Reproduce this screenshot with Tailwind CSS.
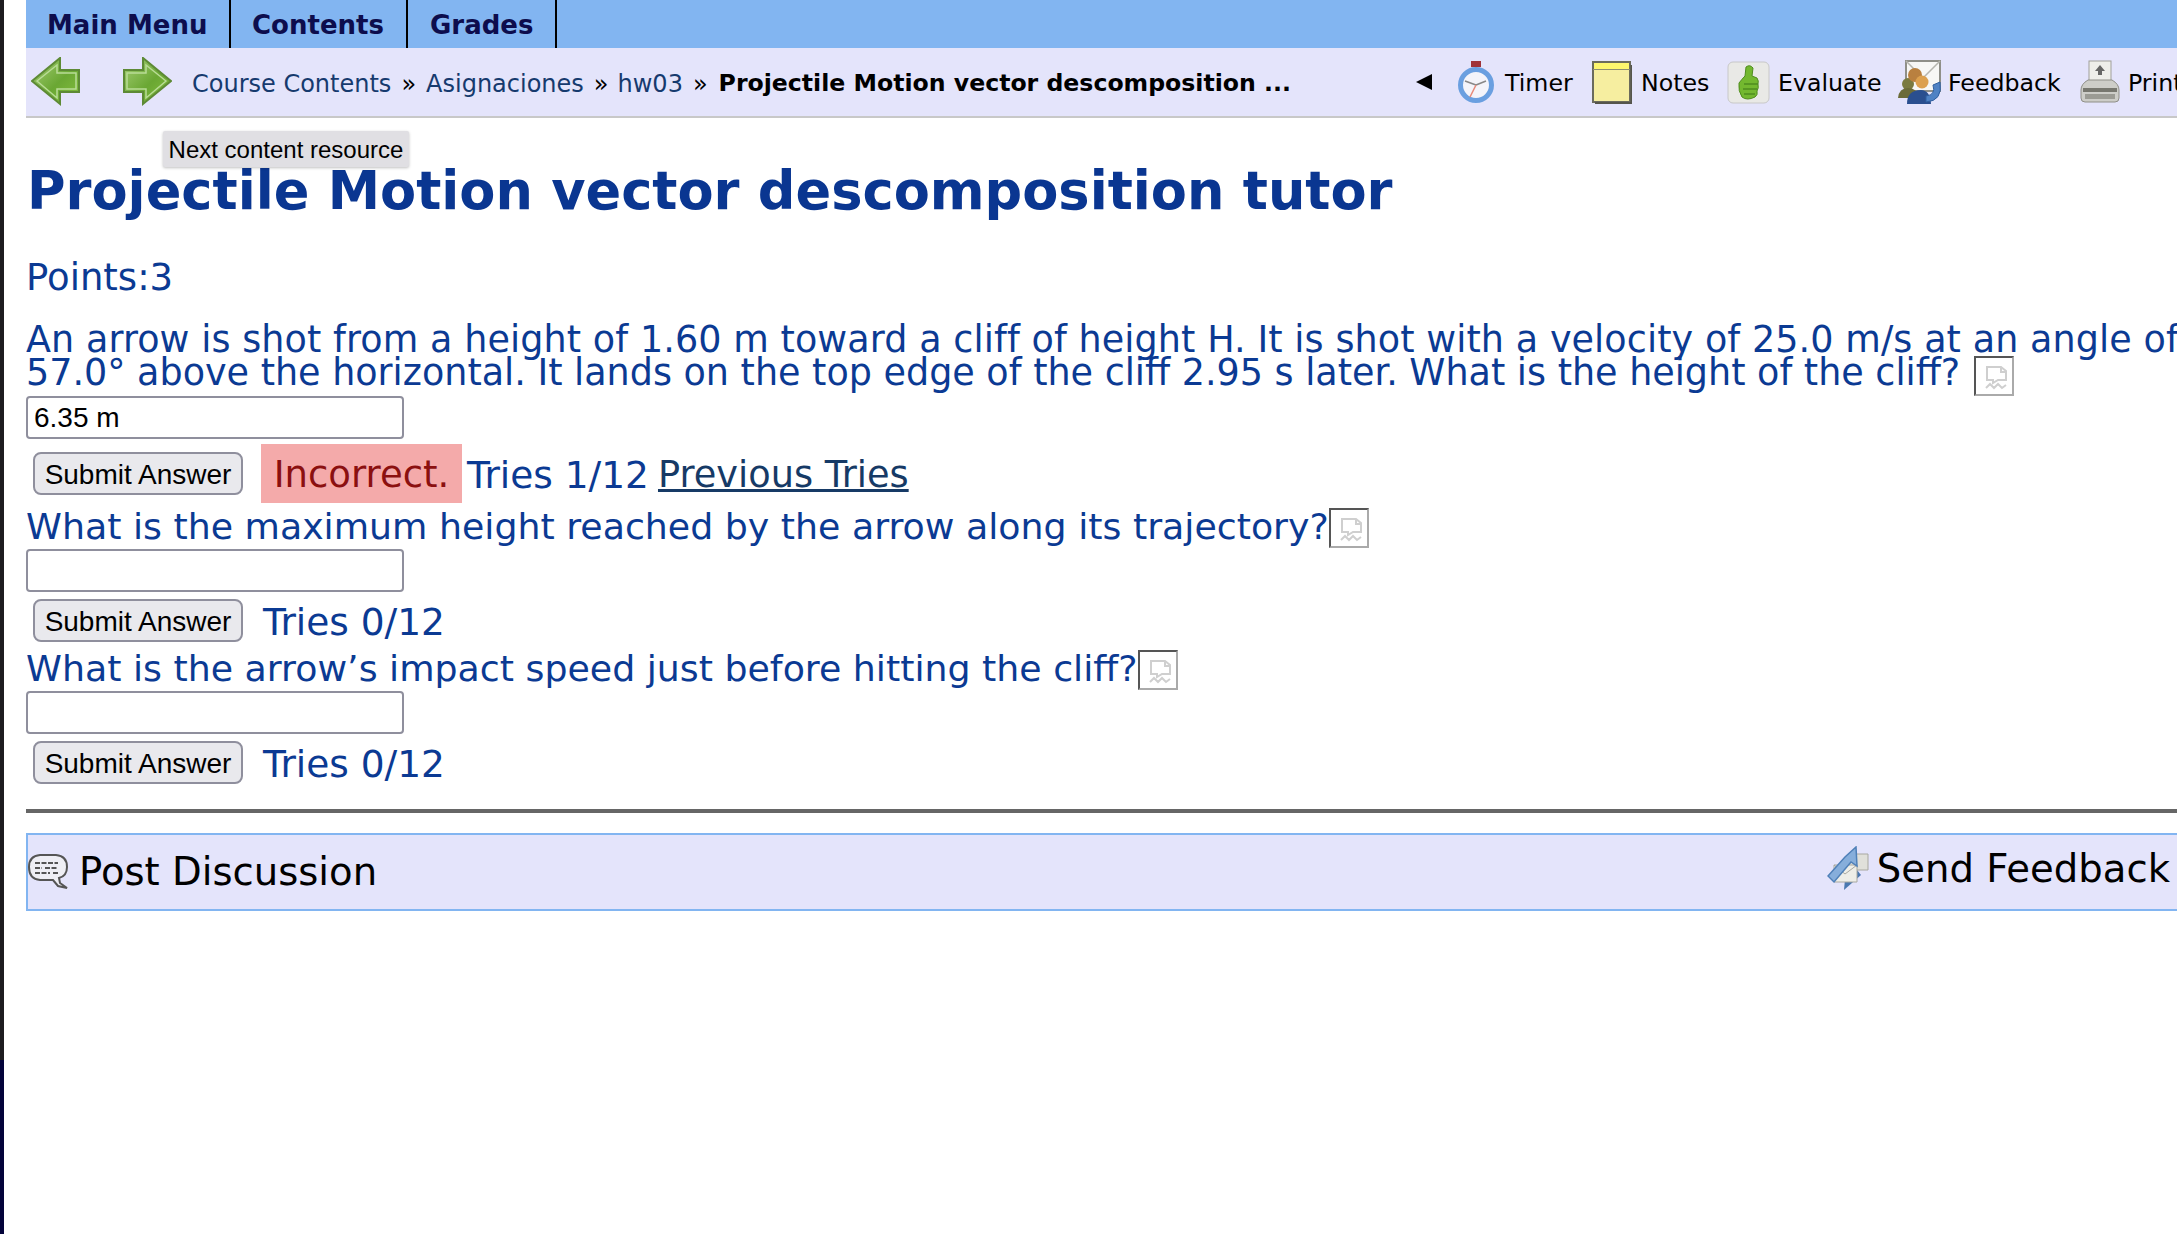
<!DOCTYPE html>
<html lang="en">
<head>
    <meta charset="UTF-8">
    <title>Projectile Motion vector descomposition tutor</title>
    <script src="https://cdn.jsdelivr.net/npm/@tailwindcss/browser@4"></script>
</head>
<body class="bg-white overflow-hidden">
<div class="flex h-[1234px] w-[2177px] overflow-hidden font-['DejaVu_Sans',Verdana,sans-serif]">
    <!-- desktop edge showing at the left -->
    <div class="w-[4px] shrink-0 flex flex-col">
        <div class="h-[1060px] bg-[#1d1c20]"></div>
        <div class="flex-1 bg-[#03033a]"></div>
    </div>
    <div class="w-[22px] shrink-0"></div>

    <div class="relative flex-1 min-w-0 overflow-hidden">
        <!-- top menu -->
        <div class="flex h-[48px] bg-[#82b5f1] text-[#0d0d4d] font-bold text-[26px]">
            <a class="flex items-center pt-[2px] pl-[21px] w-[205px] border-r-2 border-black">Main Menu</a>
            <a class="flex items-center pt-[2px] pl-[21px] w-[177px] border-r-2 border-black">Contents</a>
            <a class="flex items-center pt-[2px] pl-[22px] w-[149px] border-r-2 border-black">Grades</a>
        </div>

        <!-- nav bar -->
        <div class="flex items-center h-[70px] bg-[#e4e4fb] border-b-2 border-[#c8c8c8] text-[23.7px] whitespace-nowrap">
            <svg class="ml-[5px] shrink-0" width="50" height="50" viewBox="0 0 50 50">
                <defs>
                    <linearGradient id="arrowGreen" x1="0" y1="0" x2="1" y2="1">
                        <stop offset="0" stop-color="#a6cf77"/><stop offset="0.55" stop-color="#6aa733"/><stop offset="1" stop-color="#86c03f"/>
                    </linearGradient>
                </defs>
                <path d="M1 24 L29 1 V13 H48 V35 H29 V47 Z" fill="url(#arrowGreen)" stroke="#5d8a35" stroke-width="2"/>
                <path d="M6 24 L26 8 V16 H45 V32 H26 V41 Z" fill="none" stroke="#b9dc96" stroke-width="1.5"/>
            </svg>
            <svg class="ml-[41px] shrink-0" width="50" height="50" viewBox="0 0 50 50">
                <path d="M49 24 L21 1 V13 H2 V35 H21 V47 Z" fill="url(#arrowGreen)" stroke="#5d8a35" stroke-width="2"/>
                <path d="M44 24 L24 8 V16 H5 V32 H24 V41 Z" fill="none" stroke="#b9dc96" stroke-width="1.5"/>
            </svg>
            <div class="ml-[20px] pt-[4px] flex items-center text-[#163a6e] text-[24px]">
                <a>Course Contents</a>
                <span class="mx-[10px] text-black">»</span>
                <a>Asignaciones</a>
                <span class="ml-[10px] mr-[9px] text-black">»</span>
                <a>hw03</a>
                <span class="ml-[10px] mr-[11px] text-black">»</span>
                <span class="font-bold text-black text-[23.6px]">Projectile Motion vector descomposition ...</span>
            </div>
            <div class="absolute left-[1389px] top-[48px] h-[68px] flex items-center">
                <svg class="shrink-0" width="18" height="18" viewBox="0 0 18 18"><path d="M17 1 V17 L1 9 Z" fill="#000"/></svg>
                <svg class="ml-[25px] shrink-0" width="36" height="43" viewBox="0 0 36 43">
                    <rect x="13" y="0" width="10" height="6" fill="#a03238"/>
                    <circle cx="18" cy="24" r="15.500" fill="#f4f4fa" stroke="#6a9fe0" stroke-width="5"/>
                    <path d="M18 24 L7 20 M18 24 L28 20" stroke="#888" stroke-width="1.5"/>
                    <path d="M18 24 L12 36" stroke="#e88b7a" stroke-width="1.5"/>
                </svg>
                <span class="ml-[11px] pt-[4px] w-[87px] shrink-0">Timer</span>
                <svg class="shrink-0" width="40" height="43" viewBox="0 0 40 43">
                    <rect x="1" y="1" width="37" height="40" fill="#f6eea0" stroke="#6b6b5c" stroke-width="2"/>
                    <rect x="2" y="2" width="35" height="6" fill="#fdf66e"/>
                    <path d="M1 8.500 H38" stroke="#8d8d70" stroke-width="1"/>
                    <path d="M3 42 H39.500 V4" fill="none" stroke="#55554c" stroke-width="2"/>
                </svg>
                <span class="ml-[9px] pt-[4px] w-[86px] shrink-0">Notes</span>
                <svg class="shrink-0" width="43" height="43" viewBox="0 0 43 43">
                    <rect x="1" y="1" width="41" height="41" rx="5" fill="#e9e9e6" stroke="#c8c8c8"/>
                    <path d="M19 6 Q23 3 26 7 L25 15 L30 17 Q32 20 31 23 Q32 27 30 30 Q31 34 28 36 Q20 40 15 36 Q11 30 12 22 Q15 18 18 15 Z" fill="#73b82f" stroke="#4f8c1f" stroke-width="1"/>
                    <path d="M17 23 H31 M16 28 H30 M17 33 H28" stroke="#4f8c1f" stroke-width="1.500"/>
                </svg>
                <span class="ml-[8px] pt-[4px] w-[120px] shrink-0">Evaluate</span>
                <svg class="shrink-0" width="43" height="44" viewBox="0 0 43 44">
                    <rect x="8" y="1" width="34" height="30" fill="#f7f7f5" stroke="#8f8f88" stroke-width="2"/>
                    <path d="M8 1 L25 18 L42 1" fill="none" stroke="#b5b5ae" stroke-width="1.500"/>
                    <circle cx="10" cy="24" r="6" fill="#7a7a40"/>
                    <path d="M0 38 Q1 28 10 28 Q20 28 20 38 Z" fill="#6b6b38"/>
                    <circle cx="17" cy="15" r="7" fill="#b9803f"/>
                    <circle cx="24" cy="22" r="6.500" fill="#dca04e"/>
                    <path d="M9 44 Q9 30 23 30 Q32 30 33 44 Z" fill="#2a4f8f"/>
                    <path d="M28 36 Q38 35 35 25 L42 22 Q45 41 28 42 Z" fill="#4f82c4" stroke="#2f5f9f"/>
                </svg>
                <span class="ml-[7px] pt-[4px] w-[132px] shrink-0">Feedback</span>
                <svg class="shrink-0" width="40" height="44" viewBox="0 0 40 44">
                    <rect x="9" y="1" width="22" height="22" fill="#eeeeea" stroke="#a0a09a"/>
                    <path d="M20 5 L25 11 H22 V15 H18 V11 H15 Z" fill="#666"/>
                    <path d="M8 20 H32 Q39 24 39 30 V38 Q39 42 35 42 H5 Q1 42 1 38 V30 Q1 24 8 20 Z" fill="#cdcdc8" stroke="#8f8f88"/>
                    <rect x="3" y="28" width="34" height="4" fill="#77776f"/>
                    <rect x="5" y="34" width="30" height="5" fill="#9b9b94"/>
                </svg>
                <span class="ml-[8px] pt-[4px] shrink-0">Print</span>
            </div>
        </div>

        <!-- tooltip over the forward arrow -->
        <div class="absolute left-[137px] top-[131px] h-[36px] w-[246px] pt-[1px] flex items-center justify-center rounded-[2px] bg-[#e0dfe3] shadow-[0_1px_3px_rgba(0,0,0,0.25)] text-[24px] text-black font-['Liberation_Sans',Arial,sans-serif] whitespace-nowrap">Next content resource</div>

        <h1 class="mt-[33px] h-[80px] leading-[80px] pl-[1px] text-[52.6px] font-bold text-[#0a3691] whitespace-nowrap">Projectile Motion vector descomposition tutor</h1>

        <div class="text-[#0b3a93] text-[36.3px] whitespace-nowrap">
            <p class="mt-[27px] h-[40px] leading-[40px] text-[37px]">Points:3</p>

            <p class="mt-[25px] leading-[33px] text-[36.5px]"><span class="tracking-[0.09px]">An arrow is shot from a height of 1.60 m toward a cliff of height H. It is shot with a velocity of 25.0 m/s at an angle of</span><br>57.0° above the horizontal. It lands on the top edge of the cliff 2.95 s later. What is the height of the cliff?
                <span class="inline-block align-middle relative top-[1px] -my-[20px] ml-[2px] w-[40px] h-[40px] border-2 border-t-[#555] border-l-[#555] border-b-[#aaa] border-r-[#aaa]">
                    <svg width="36" height="36" viewBox="0 0 36 36" fill="none" stroke="#cfcfcf" stroke-width="2"><path d="M11 22 V9 H25 L30 13 V22 H22 L17 25 V22 Z"/><path d="M25 9 V14 H30"/><path d="M10 30 L14 26 L18 30 L22 26 L26 30 L30 27"/></svg>
                </span>
            </p>
            <input type="text" value="6.35 m" class="block mt-[7px] w-[378px] h-[43px] px-[6px] bg-white border-2 border-[#8f8f9d] rounded-[4px] text-black text-[28px] font-['Liberation_Sans',Arial,sans-serif]">
            <div class="flex items-center mt-[5px] h-[59px]">
                <button class="ml-[7px] w-[210px] h-[43px] bg-[#e9e9ed] border-2 border-[#8f8f9d] rounded-[8px] text-black text-[28px] font-['Liberation_Sans',Arial,sans-serif]">Submit Answer</button>
                <span class="ml-[18px] flex items-center justify-center w-[201px] h-[59px] pt-[3px] bg-[#f4aaaa] text-[#8b1010] text-[37px]">Incorrect.</span>
                <span class="ml-[5px] pt-[3px] text-[37.5px]">Tries 1/12</span>
                <a class="ml-[9px] pt-[3px] underline text-[#163a66] text-[36.7px]">Previous Tries</a>
            </div>

            <div class="flex items-center mt-[5px] h-[40px]">
                <span class="pb-[2px]">What is the maximum height reached by the arrow along its trajectory?</span>
                <span class="block w-[40px] h-[40px] border-2 border-t-[#555] border-l-[#555] border-b-[#aaa] border-r-[#aaa]">
                    <svg width="36" height="36" viewBox="0 0 36 36" fill="none" stroke="#cfcfcf" stroke-width="2"><path d="M11 22 V9 H25 L30 13 V22 H22 L17 25 V22 Z"/><path d="M25 9 V14 H30"/><path d="M10 30 L14 26 L18 30 L22 26 L26 30 L30 27"/></svg>
                </span>
            </div>
            <input type="text" class="block mt-[1px] w-[378px] h-[43px] px-[6px] bg-white border-2 border-[#8f8f9d] rounded-[4px]">
            <div class="flex items-center mt-[7px] h-[43px]">
                <button class="ml-[7px] w-[210px] h-[43px] bg-[#e9e9ed] border-2 border-[#8f8f9d] rounded-[8px] text-black text-[28px] font-['Liberation_Sans',Arial,sans-serif]">Submit Answer</button>
                <span class="ml-[20px] pt-[3px] text-[37.5px]">Tries 0/12</span>
            </div>

            <div class="flex items-center mt-[8px] h-[40px]">
                <span class="pb-[2px]">What is the arrow’s impact speed just before hitting the cliff?</span>
                <span class="block w-[40px] h-[40px] border-2 border-t-[#555] border-l-[#555] border-b-[#aaa] border-r-[#aaa]">
                    <svg width="36" height="36" viewBox="0 0 36 36" fill="none" stroke="#cfcfcf" stroke-width="2"><path d="M11 22 V9 H25 L30 13 V22 H22 L17 25 V22 Z"/><path d="M25 9 V14 H30"/><path d="M10 30 L14 26 L18 30 L22 26 L26 30 L30 27"/></svg>
                </span>
            </div>
            <input type="text" class="block mt-[1px] w-[378px] h-[43px] px-[6px] bg-white border-2 border-[#8f8f9d] rounded-[4px]">
            <div class="flex items-center mt-[7px] h-[43px]">
                <button class="ml-[7px] w-[210px] h-[43px] bg-[#e9e9ed] border-2 border-[#8f8f9d] rounded-[8px] text-black text-[28px] font-['Liberation_Sans',Arial,sans-serif]">Submit Answer</button>
                <span class="ml-[20px] pt-[3px] text-[37.5px]">Tries 0/12</span>
            </div>
        </div>

        <div class="mt-[25px] h-[4px] bg-[#666]"></div>

        <!-- footer bar -->
        <div class="mt-[20px] h-[78px] flex items-center justify-between bg-[#e4e4fb] border-y-2 border-l-2 border-[#82b5f1] text-[38.6px] text-black whitespace-nowrap">
            <div class="flex items-center">
                <svg width="42" height="36" viewBox="0 0 42 36">
                    <path d="M12 1 H28 Q39 2 39 13 Q39 22 31 24 L32 29 L39 34 L30 32 L25 26 H12 Q1 25 1 13 Q1 2 12 1 Z" fill="#eeeef4" stroke="#555" stroke-width="2"/>
                    <path d="M7 9 H30 M7 14 H14 M17 14 H30 M7 19 H22 M25 19 H30" stroke="#555" stroke-width="2" stroke-dasharray="5 1.500"/>
                </svg>
                <span class="ml-[9px]">Post Discussion</span>
            </div>
            <div class="flex items-center pr-[7px] -mt-[6px]">
                <svg width="44" height="45" viewBox="0 0 44 45">
                    <path d="M18 33 L30 24 L34 29 L17 44 Z" fill="#4a78b0"/>
                    <path d="M22 8 H41 V24 H22 Z" fill="#e0e0da" stroke="#a8a8a0"/>
                    <path d="M7 19 H30 V36 H7 Z" fill="#eeeee8" stroke="#a8a8a0"/>
                    <path d="M7 19 L18 28 L30 19" fill="none" stroke="#a8a8a0"/>
                    <path d="M29 1 L30 20 L24 16 L7 36 L1 30 L18 11 Z" fill="#86aedb" stroke="#4f80b8" stroke-width="1.500"/>
                </svg>
                <span class="ml-[6px]">Send Feedback</span>
            </div>
        </div>
    </div>
</div>
</body>
</html>
